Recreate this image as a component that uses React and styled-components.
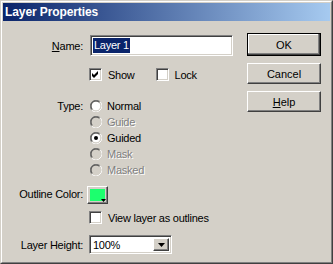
import React from "react";
import styled, { createGlobalStyle } from "styled-components";

const Global = createGlobalStyle`
  html, body { margin: 0; padding: 0; background: #d4d0c8; }
  body { font-family: "Liberation Sans", Arial, sans-serif; font-size: 11px; color: #000; }
  * { box-sizing: border-box; }
`;

const Window = styled.div`
  width: 333px;
  height: 264px;
  border: 1px solid;
  border-color: #d4d0c8 #404040 #404040 #d4d0c8;
  background: #d4d0c8;
`;

const Frame = styled.div`
  height: 100%;
  border: 1px solid;
  border-color: #ffffff #808080 #808080 #ffffff;
  padding: 1px;
  display: flex;
  flex-direction: column;
`;

const TitleBar = styled.div`
  height: 18px;
  flex: none;
  display: flex;
  align-items: center;
  padding-left: 2px;
  background: linear-gradient(to right, #0a246a, #a6caf0);
  color: #fff;
  font-weight: bold;
  font-size: 12px;
  letter-spacing: -0.1px;
`;

const Body = styled.div`
  flex: 1;
  display: flex;
  justify-content: space-between;
  letter-spacing: -0.25px;
`;

const Form = styled.div`
  display: flex;
  flex-direction: column;
`;

const Row = styled.div`
  display: flex;
  align-items: ${(p) => (p.$top ? "flex-start" : "center")};
  height: ${(p) => (p.$h ? `${p.$h}px` : "auto")};
  margin-top: ${(p) => p.$mt}px;
`;

const Label = styled.div`
  width: 80px;
  margin-right: 6px;
  text-align: right;
  white-space: nowrap;
  line-height: ${(p) => (p.$lh ? `${p.$lh}px` : "normal")};
  margin-top: ${(p) => p.$dy || 0}px;
`;

const U = styled.span`
  text-decoration: underline;
`;

const sunken = `
  border: 1px solid;
  border-color: #808080 #ffffff #ffffff #808080;
  box-shadow: inset 1px 1px #404040, inset -1px -1px #d4d0c8;
  background: #fff;
`;

const TextField = styled.div`
  ${sunken}
  width: 143px;
  height: 21px;
  margin-left: 1px;
  display: flex;
  align-items: center;
  padding-left: 2px;
`;

const Selected = styled.span`
  background: #0a246a;
  color: #fff;
  line-height: 15px;
  padding: 0 1px;
`;

const CheckItem = styled.div`
  display: flex;
  align-items: center;
  gap: 6px;
  margin-left: ${(p) => p.$ml || 0}px;
  white-space: nowrap;
`;

const Box = styled.div`
  ${sunken}
  width: 13px;
  height: 13px;
  flex: none;
  display: flex;
  align-items: center;
  justify-content: center;
`;

const RadioList = styled.div`
  display: flex;
  flex-direction: column;
`;

const RadioRow = styled.div`
  height: 16px;
  display: flex;
  align-items: center;
  gap: 5px;
  margin-left: 1px;
  color: ${(p) => (p.$disabled ? "#808080" : "#000")};
  text-shadow: ${(p) => (p.$disabled ? "1px 1px #ffffff" : "none")};
`;

const raised = `
  border: 1px solid;
  border-color: #ffffff #404040 #404040 #ffffff;
  box-shadow: inset -1px -1px #808080, inset 1px 1px #d4d0c8;
  background: #d4d0c8;
`;

const Swatch = styled.div`
  ${raised}
  width: 21px;
  height: 18px;
  margin-left: -2px;
  padding: 2px;
  position: relative;
`;

const SwatchFill = styled.div`
  width: 100%;
  height: 100%;
  background: ${(p) => p.$color};
`;

const SwatchArrow = styled.svg`
  position: absolute;
  right: 1px;
  bottom: 1px;
`;

const Combo = styled.div`
  ${sunken}
  width: 83px;
  height: 19px;
  display: flex;
  align-items: stretch;
  padding: 2px;
`;

const ComboText = styled.div`
  flex: 1;
  display: flex;
  align-items: center;
  padding-left: 1px;
`;

const ComboButton = styled.div`
  ${raised}
  width: 16px;
  display: flex;
  align-items: center;
  justify-content: center;
`;

const Buttons = styled.div`
  display: flex;
  flex-direction: column;
  gap: 7px;
  padding-top: 12px;
  padding-right: 9px;
`;

const Button = styled.div`
  width: 74px;
  height: ${(p) => (p.$default ? 23 : 21)}px;
  display: flex;
  align-items: center;
  justify-content: center;
  letter-spacing: 0;
  ${(p) =>
    p.$default
      ? `border: 1px solid #000;
         box-shadow: inset -1px -1px #404040, inset -2px -2px #808080, inset 1px 1px #ffffff;
         background: #d4d0c8;`
      : raised}
`;

function Radio({ checked, disabled }) {
  return (
    <svg width="12" height="12" viewBox="0 0 12 12">
      <circle cx="6" cy="6" r="4.5" fill={disabled ? "#d4d0c8" : "#ffffff"} />
      <path d="M1.76 10.24 A6 6 0 0 1 10.24 1.76" stroke="#808080" strokeWidth="1" fill="none" transform="translate(0,0)" />
      <path d="M10.24 1.76 A6 6 0 0 1 1.76 10.24" stroke="#ffffff" strokeWidth="1" fill="none" />
      <path d="M2.46 9.54 A5 5 0 0 1 9.54 2.46" stroke="#404040" strokeWidth="1" fill="none" />
      <path d="M9.54 2.46 A5 5 0 0 1 2.46 9.54" stroke="#d4d0c8" strokeWidth="1" fill="none" />
      {checked && <circle cx="6" cy="6" r="2" fill="#000" />}
    </svg>
  );
}

function Check({ checked }) {
  return (
    <Box>
      {checked && (
        <svg width="9" height="9" viewBox="0 0 9 9">
          <polygon points="1,3 3,5 7,1 7,4 3,8 1,6" fill="#000" />
        </svg>
      )}
    </Box>
  );
}

const radios = [
  { label: "Normal" },
  { label: "Guide", disabled: true },
  { label: "Guided", checked: true },
  { label: "Mask", disabled: true },
  { label: "Masked", disabled: true },
];

export default function App() {
  return (
    <>
      <Global />
      <Window>
        <Frame>
          <TitleBar>Layer Properties</TitleBar>
          <Body>
            <Form>
              <Row $mt={14} $h={21}>
                <Label>
                  <U>N</U>ame:
                </Label>
                <TextField>
                  <Selected>Layer 1</Selected>
                </TextField>
              </Row>
              <Row $mt={12} $h={13}>
                <Label />
                <CheckItem>
                  <Check checked />
                  Show
                </CheckItem>
                <CheckItem $ml={21}>
                  <Check />
                  Lock
                </CheckItem>
              </Row>
              <Row $mt={17} $top>
                <Label $lh={16}>Type:</Label>
                <RadioList>
                  {radios.map((r) => (
                    <RadioRow key={r.label} $disabled={r.disabled}>
                      <Radio checked={r.checked} disabled={r.disabled} />
                      {r.label}
                    </RadioRow>
                  ))}
                </RadioList>
              </Row>
              <Row $mt={8} $h={18}>
                <Label $dy={-2}>Outline Color:</Label>
                <Swatch>
                  <SwatchFill $color="#1cff6e" />
                  <SwatchArrow width="5" height="3" viewBox="0 0 5 3">
                    <polygon points="0,0 5,0 2.5,3" fill="#000" />
                  </SwatchArrow>
                </Swatch>
              </Row>
              <Row $mt={7} $h={13}>
                <Label />
                <CheckItem>
                  <Check />
                  View layer as outlines
                </CheckItem>
              </Row>
              <Row $mt={11} $h={19}>
                <Label>Layer Height:</Label>
                <Combo>
                  <ComboText>100%</ComboText>
                  <ComboButton>
                    <svg width="7" height="4" viewBox="0 0 7 4">
                      <polygon points="0,0 7,0 3.5,4" fill="#000" />
                    </svg>
                  </ComboButton>
                </Combo>
              </Row>
            </Form>
            <Buttons>
              <Button $default>OK</Button>
              <Button>Cancel</Button>
              <Button>
                <U>H</U>elp
              </Button>
            </Buttons>
          </Body>
        </Frame>
      </Window>
    </>
  );
}
